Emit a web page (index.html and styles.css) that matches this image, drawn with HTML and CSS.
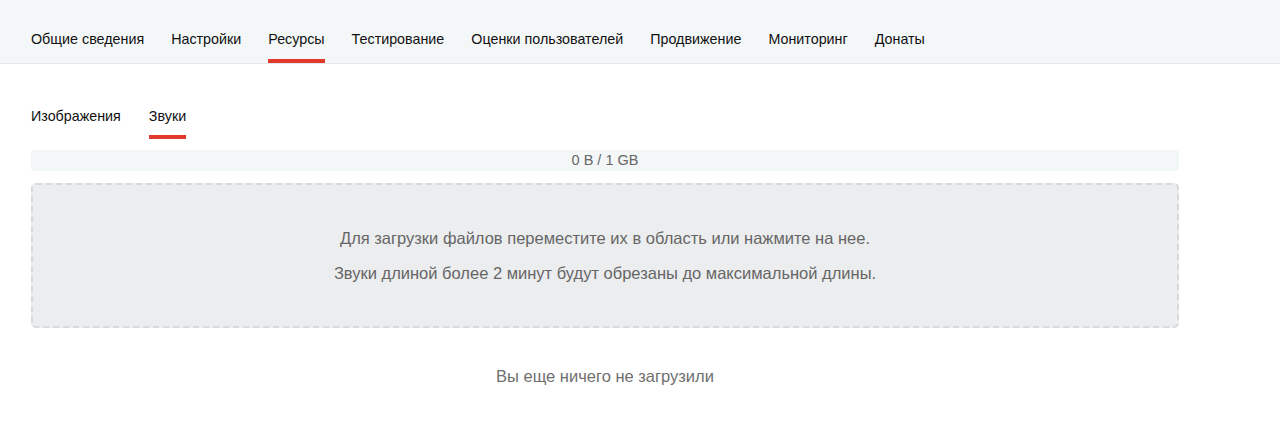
FILE: index.html
```html
<!DOCTYPE html>
<html lang="ru">
<head>
    <meta charset="UTF-8">
    <meta name="viewport" content="width=device-width, initial-scale=1.0">
    <title>Ресурсы</title>
    <link rel="stylesheet" href="styles.css">
</head>
<body>
<div class="header">
    <nav class="nav">
        <a class="nav-item">Общие сведения</a>
        <a class="nav-item">Настройки</a>
        <a class="nav-item active">Ресурсы</a>
        <a class="nav-item">Тестирование</a>
        <a class="nav-item">Оценки пользователей</a>
        <a class="nav-item">Продвижение</a>
        <a class="nav-item">Мониторинг</a>
        <a class="nav-item">Донаты</a>
    </nav>
</div>

<div class="content">
    <div class="subtabs">
        <a class="subtab">Изображения</a>
        <a class="subtab active">Звуки</a>
    </div>

    <div class="quota">0 B / 1 GB</div>

    <div class="dropzone">
        <p>Для загрузки файлов переместите их в область или нажмите на нее.</p>
        <p>Звуки длиной более 2 минут будут обрезаны до максимальной длины.</p>
    </div>

    <div class="empty">Вы еще ничего не загрузили</div>
</div>
</body>
</html>
```

FILE: styles.css
```css
body {
    font-family: 'Liberation Sans', Arial, sans-serif;
    margin: 0;
    padding: 0;
    background: #fff;
    color: #111;
}

.header {
    background: #f4f7f8;
    border-bottom: 1px solid #e4e7e9;
    height: 63px;
}

.nav {
    display: flex;
    gap: 27px;
    padding-left: 31px;
    height: 100%;
    align-items: flex-end;
}

.nav-item,
.subtab {
    font-size: 14.3px;
    color: #111;
    cursor: pointer;
    position: relative;
}

.nav-item {
    padding-bottom: 16px;
}

.nav-item.active::after,
.subtab.active::after {
    content: '';
    position: absolute;
    left: 0;
    right: 0;
    bottom: 0;
    height: 4px;
    background: #e3392c;
}

.content {
    width: 1148px;
    padding-left: 31px;
}

.subtabs {
    display: flex;
    gap: 28px;
    padding-top: 44px;
}

.subtab {
    padding-bottom: 15px;
}

.quota {
    margin-top: 11px;
    height: 21px;
    line-height: 21px;
    background: #f4f7f8;
    border-radius: 3px;
    text-align: center;
    font-size: 14.5px;
    color: #666;
}

.dropzone {
    margin-top: 12px;
    height: 141px;
    background: #ecedef;
    border: 2px dashed #d8d9db;
    border-radius: 5px;
    display: flex;
    flex-direction: column;
    justify-content: center;
    align-items: center;
    gap: 16px;
    color: #666;
    font-size: 16.5px;
    cursor: pointer;
}

.dropzone p {
    margin: 0;
}

.empty {
    margin-top: 39px;
    text-align: center;
    font-size: 16.5px;
    color: #6f6f6f;
}
```
